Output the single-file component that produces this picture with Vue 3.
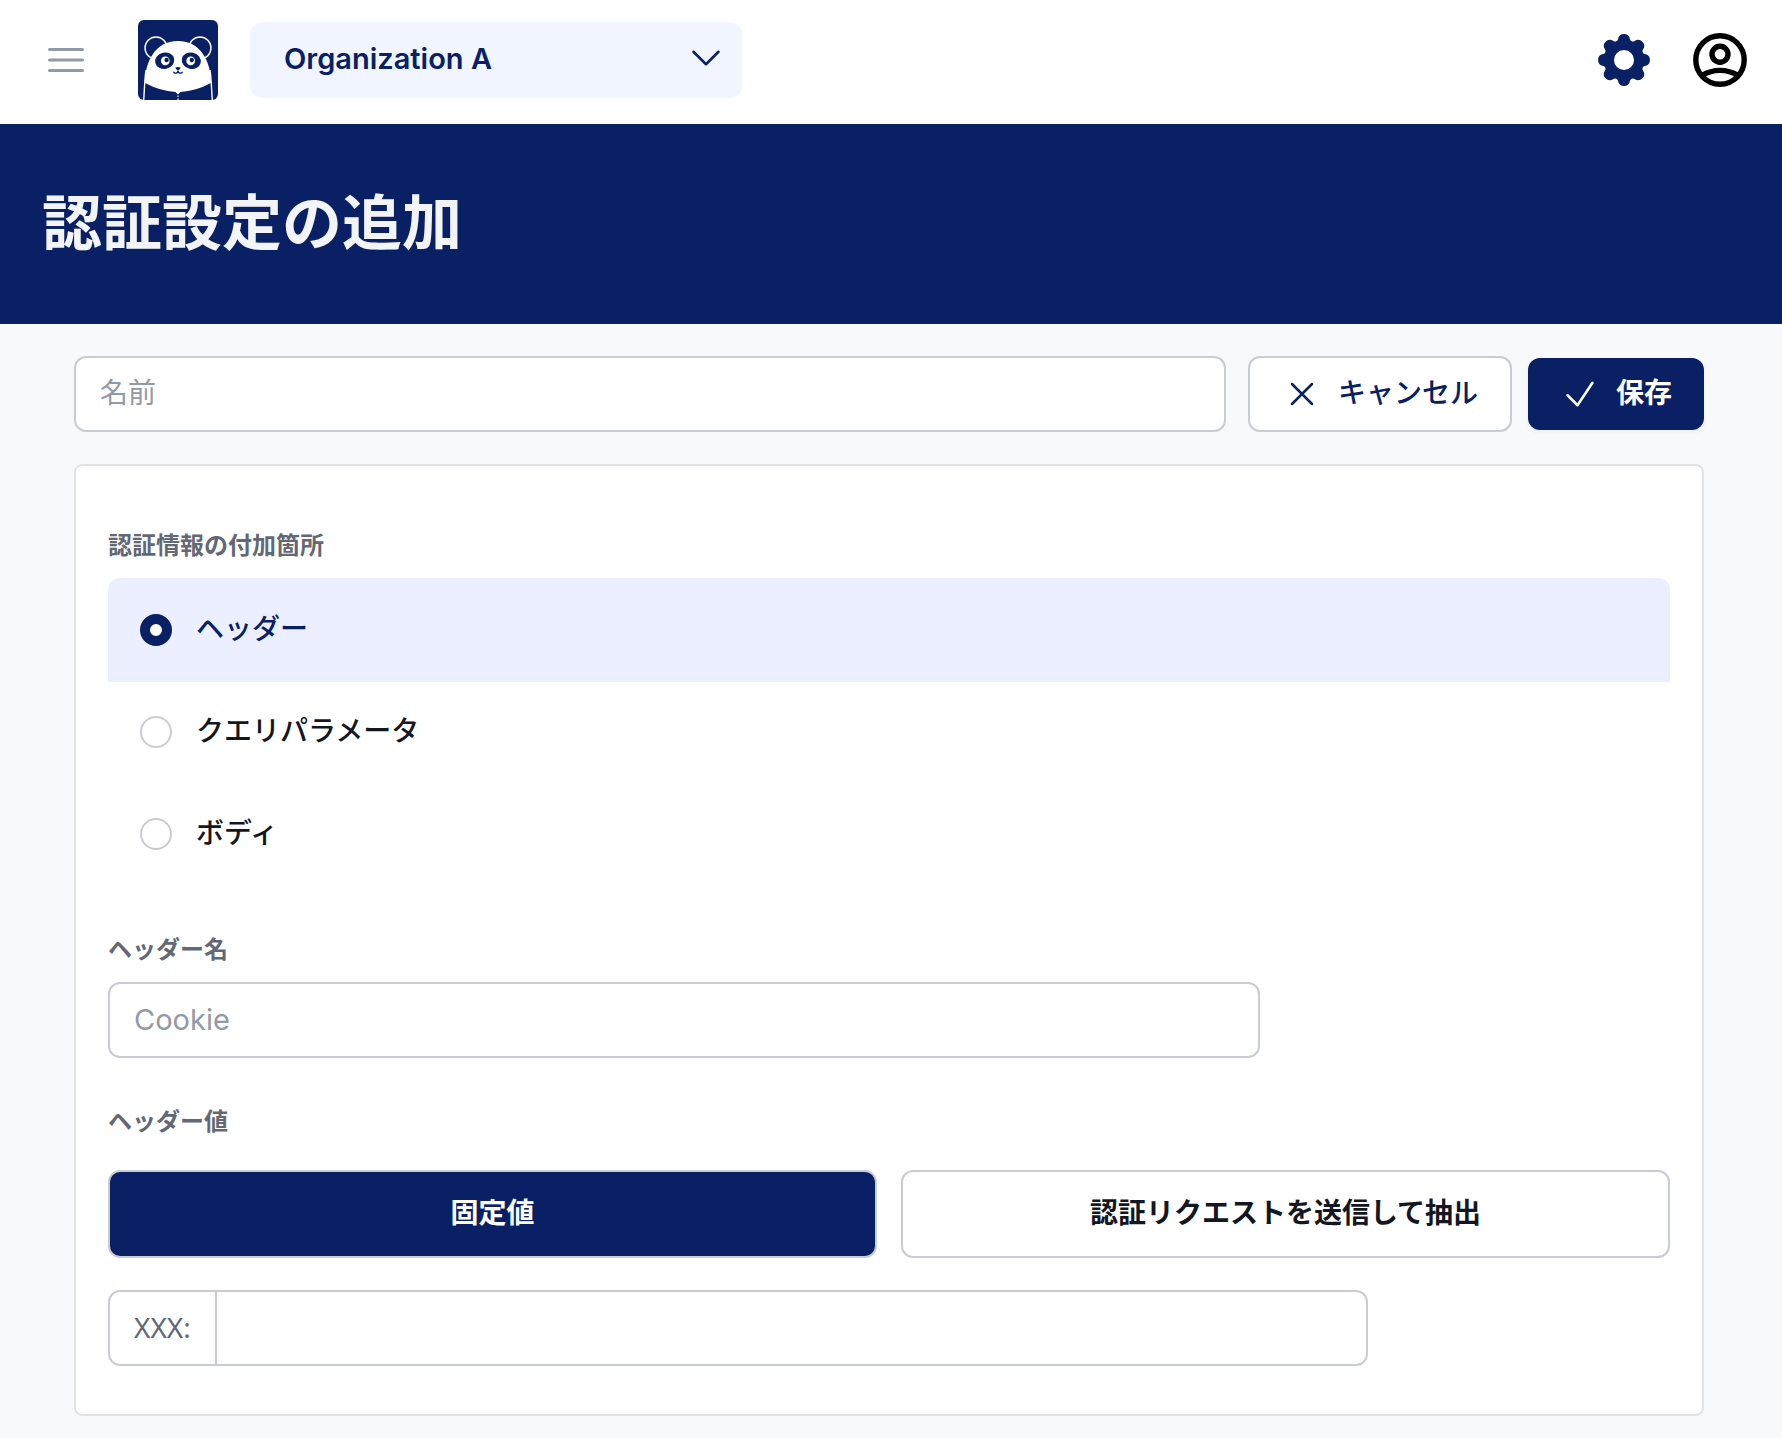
<script setup>
import { ref } from 'vue'

const organization = ref('Organization A')
const name = ref('')
const location = ref('header')
const headerName = ref('')
const headerValue = ref('')
const valueMode = ref('fixed')

const locations = [
  { id: 'header', label: 'ヘッダー' },
  { id: 'query', label: 'クエリパラメータ' },
  { id: 'body', label: 'ボディ' },
]

const valueModes = [
  { id: 'fixed', label: '固定値' },
  { id: 'extract', label: '認証リクエストを送信して抽出' },
]

// Gear outline: eight round teeth joined by small concave fillets.
function gearOutline() {
  const point = (degrees) => {
    const a = (degrees * Math.PI) / 180
    return `${(21.77 * Math.cos(a)).toFixed(2)} ${(21.77 * Math.sin(a)).toFixed(2)}`
  }
  let d = `M${point(-15.77)}`
  for (let i = 0; i < 8; i++) {
    const angle = i * 45
    d += `A6 6 0 0 1 ${point(angle + 15.77)}A3 3 0 0 0 ${point(angle + 29.23)}`
  }
  return d + 'ZM10 0A10 10 0 1 0 -10 0A10 10 0 1 0 10 0Z'
}
const gearPath = gearOutline()
</script>

<template>
  <div class="page">
    <header class="topbar">
      <button type="button" class="icon-button menu" aria-label="メニュー">
        <svg class="line-icon" width="48" height="48" viewBox="0 0 24 24">
          <path d="M3.75 6.75h16.5M3.75 12h16.5m-16.5 5.25h16.5" />
        </svg>
      </button>

      <a href="#" class="logo" aria-label="ホーム">
        <svg width="80" height="80" viewBox="0 0 80 80">
          <rect width="80" height="80" fill="#092164" />
          <g fill="#092164" stroke="#fff" stroke-width="1.4">
            <circle cx="18" cy="28" r="11" />
            <circle cx="62" cy="28" r="11" />
            <path d="M5.700 80C6.500 70 6.500 60 8 50M74.300 80C73.500 70 73.500 60 72 50" />
          </g>
          <path
            fill="#fff"
            d="M7 63C7 42 17 21 40 21C63 21 73 42 73 63Q58 71 42.500 72L40 74.500L37.500 72Q22 71 7 63Z"
          />
          <g fill="#092164">
            <ellipse cx="26.700" cy="40.700" rx="9.600" ry="8.200" transform="rotate(-12 26.700 40.700)" />
            <ellipse cx="53.300" cy="40.700" rx="9.600" ry="8.200" transform="rotate(12 53.300 40.700)" />
            <path d="M37.300 47.500Q40 46.600 42.700 47.500Q42 50 40 50.300Q38 50 37.300 47.500Z" />
          </g>
          <g fill="#fff">
            <circle cx="27.300" cy="40.800" r="4.400" />
            <circle cx="52.700" cy="40.800" r="4.400" />
          </g>
          <g fill="#092164">
            <circle cx="28.600" cy="40" r="2.200" />
            <circle cx="53.800" cy="40" r="2.200" />
          </g>
          <path
            fill="none"
            stroke="#092164"
            stroke-width="1.300"
            d="M35.500 51.800Q36 53.300 38 53.200Q40 53 40 50.500Q40 53 42 53.200Q44 53.300 44.500 51.800"
          />
          <path stroke="#fff" stroke-width="1.200" stroke-dasharray="1.500 1.500" d="M40 75.500V80" />
        </svg>
      </a>

      <div class="org">
        <select v-model="organization" class="org-select" aria-label="組織">
          <option>Organization A</option>
        </select>
        <svg class="line-icon org-chevron" width="40" height="40" viewBox="0 0 24 24">
          <path d="M19.500 8.250l-7.500 7.500-7.500-7.500" />
        </svg>
      </div>

      <nav class="actions">
        <button type="button" class="icon-button gear" aria-label="設定">
          <svg width="54" height="54" viewBox="-27 -27 54 54">
            <path :d="gearPath" fill="currentColor" fill-rule="evenodd" />
          </svg>
        </button>
        <button type="button" class="icon-button account" aria-label="アカウント">
          <svg width="54" height="54" viewBox="-27 -27 54 54" fill="none" stroke="currentColor" stroke-width="5.400">
            <circle r="24.200" />
            <circle cy="-5.700" r="8" />
            <path d="M-18.500 15.500Q0 5.200 18.500 15.500" />
          </svg>
        </button>
      </nav>
    </header>

    <div class="banner">
      <h1 class="title">認証設定の追加</h1>
    </div>

    <form class="content" @submit.prevent>
      <div class="toolbar">
        <input v-model="name" class="field name-field" type="text" placeholder="名前" aria-label="名前" />
        <div class="toolbar-buttons">
          <button type="button" class="button cancel">
            <svg class="line-icon" width="40" height="40" viewBox="0 0 24 24">
              <path d="M6 18L18 6M6 6l12 12" />
            </svg>
            <span class="caption">キャンセル</span>
          </button>
          <button type="submit" class="button save">
            <svg class="line-icon" width="40" height="40" viewBox="0 0 24 24">
              <path d="M4.500 12.750l6 6 9-13.500" />
            </svg>
            <span class="caption">保存</span>
          </button>
        </div>
      </div>

      <section class="card">
        <fieldset class="group">
          <legend class="label">認証情報の付加箇所</legend>
          <label
            v-for="item in locations"
            :key="item.id"
            class="option"
            :class="{ selected: location === item.id }"
          >
            <input v-model="location" class="radio" type="radio" name="location" :value="item.id" />
            <span class="caption">{{ item.label }}</span>
          </label>
        </fieldset>

        <div class="group">
          <label class="label" for="header-name">ヘッダー名</label>
          <input id="header-name" v-model="headerName" class="field limited" type="text" placeholder="Cookie" />
        </div>

        <div class="group">
          <span id="value-label" class="label">ヘッダー値</span>
          <div class="modes" role="group" aria-labelledby="value-label">
            <button
              v-for="mode in valueModes"
              :key="mode.id"
              type="button"
              class="mode"
              :class="{ active: valueMode === mode.id }"
              :aria-pressed="valueMode === mode.id"
              @click="valueMode = mode.id"
            >
              {{ mode.label }}
            </button>
          </div>
          <div class="prefixed">
            <label class="prefix" for="header-value">XXX:</label>
            <input id="header-value" v-model="headerValue" class="field prefixed-field" type="text" />
          </div>
        </div>
      </section>
    </form>
  </div>
</template>

<style>
body {
  margin: 0;
  background: #f8f9fb;
}
</style>

<style scoped>
.page,
.page * {
  box-sizing: border-box;
}

.page {
  --navy: #092164;
  --line: #c9ccd3;
  --ink: #131722;
  --muted: #636875;
  --faint: #9499a6;
  min-height: 100vh;
  font-family: Inter, "Noto Sans CJK JP", sans-serif;
  font-size: 28px;
  line-height: 40px;
  color: var(--ink);
  background: #f8f9fb;
}

button,
input,
select {
  margin: 0;
  font: inherit;
  color: inherit;
}

svg {
  display: block;
  flex: none;
}

.line-icon {
  fill: none;
  stroke: currentColor;
  stroke-width: 1.5;
  stroke-linecap: round;
  stroke-linejoin: round;
}

/* Top bar */
.topbar {
  display: flex;
  align-items: center;
  height: 124px;
  padding: 0 35px 4px 42px;
  background: #fff;
}

.icon-button {
  padding: 0;
  border: 0;
  background: none;
  cursor: pointer;
}

.menu {
  color: var(--faint);
}

.logo {
  margin-left: 48px;
  border-radius: 6px;
  overflow: hidden;
}

.org {
  display: grid;
  align-items: center;
  width: 492px;
  margin-left: 32px;
  color: var(--navy);
}

.org > * {
  grid-area: 1 / 1;
}

.org-select {
  width: 100%;
  height: 76px;
  padding: 0 64px 2px 34px;
  border: 0;
  border-radius: 12px;
  background: #f0f5ff;
  font-size: 29px;
  font-weight: 600;
  appearance: none;
}

.org-chevron {
  justify-self: end;
  margin: 0 16px 4px 0;
  pointer-events: none;
}

.actions {
  display: flex;
  gap: 42px;
  margin-left: auto;
}

.gear {
  color: var(--navy);
}

.account {
  color: #000;
}

/* Page title */
.banner {
  display: flex;
  align-items: center;
  height: 200px;
  padding: 0 42px 2px;
  background: var(--navy);
}

.title {
  margin: 0;
  font-size: 60px;
  font-weight: 600;
  line-height: 72px;
  color: #f3f4f6;
}

/* Form */
.content {
  padding: 32px 78px 22px 74px;
}

.toolbar {
  display: flex;
  align-items: center;
  gap: 22px;
}

.toolbar-buttons {
  display: flex;
  align-items: center;
  gap: 16px;
}

.caption {
  padding-bottom: 2px;
}

.field {
  height: 76px;
  padding: 0 24px 2px;
  border: 2px solid var(--line);
  border-radius: 12px;
  background: #fff;
}

.field::placeholder {
  color: var(--faint);
  opacity: 1;
}

.name-field {
  flex: 1;
  min-width: 0;
}

.button {
  display: flex;
  align-items: center;
  gap: 16px;
  padding: 0 32px;
  border-radius: 12px;
  font-weight: 500;
  white-space: nowrap;
  cursor: pointer;
}

.cancel {
  height: 76px;
  border: 2px solid var(--line);
  background: #fff;
  color: var(--navy);
}

.save {
  height: 72px;
  border: 0;
  background: var(--navy);
  color: #fff;
  font-weight: 600;
  box-shadow: 0 2px 4px rgb(0 0 0 / 5%);
}

.card {
  display: flex;
  flex-direction: column;
  gap: 44px;
  margin-top: 32px;
  padding: 60px 32px 48px;
  border: 2px solid #e2e3e8;
  border-radius: 8px;
  background: #fff;
}

.group {
  min-width: 0;
  margin: 0;
  padding: 0;
  border: 0;
}

.label {
  display: block;
  margin-bottom: 12px;
  padding: 0;
  font-size: 24px;
  font-weight: 600;
  color: var(--muted);
}

.option {
  display: flex;
  align-items: center;
  gap: 24px;
  height: 104px;
  padding: 0 32px;
  font-weight: 500;
}

.option + .option {
  margin-top: -2px;
}

.option:first-of-type {
  border-radius: 12px 12px 0 0;
}

.option.selected {
  background: #ebefff;
  color: var(--navy);
}

.radio {
  flex: none;
  width: 32px;
  height: 32px;
  border: 2px solid var(--line);
  border-radius: 50%;
  background: #fff;
  appearance: none;
}

.radio:checked {
  border: 10px solid var(--navy);
}

.limited {
  display: block;
  width: 100%;
  max-width: 1152px;
  font-size: 29px;
}

.modes {
  display: grid;
  grid-template-columns: 1fr 1fr;
  gap: 24px;
  margin: 28px 0 32px;
}

.mode {
  height: 88px;
  padding: 0 24px 2px;
  border: 2px solid var(--line);
  border-radius: 12px;
  background: #fff;
  font-weight: 700;
  cursor: pointer;
}

.mode.active {
  background: var(--navy);
  color: #fff;
}

.prefixed {
  display: flex;
  max-width: 1260px;
}

.prefix {
  display: flex;
  align-items: center;
  padding: 0 24px 2px;
  border: 2px solid var(--line);
  border-radius: 12px 0 0 12px;
  font-family: "Noto Sans", sans-serif;
  color: var(--muted);
}

.prefixed-field {
  flex: 1;
  min-width: 0;
  border-left: 0;
  border-radius: 0 12px 12px 0;
}
</style>
